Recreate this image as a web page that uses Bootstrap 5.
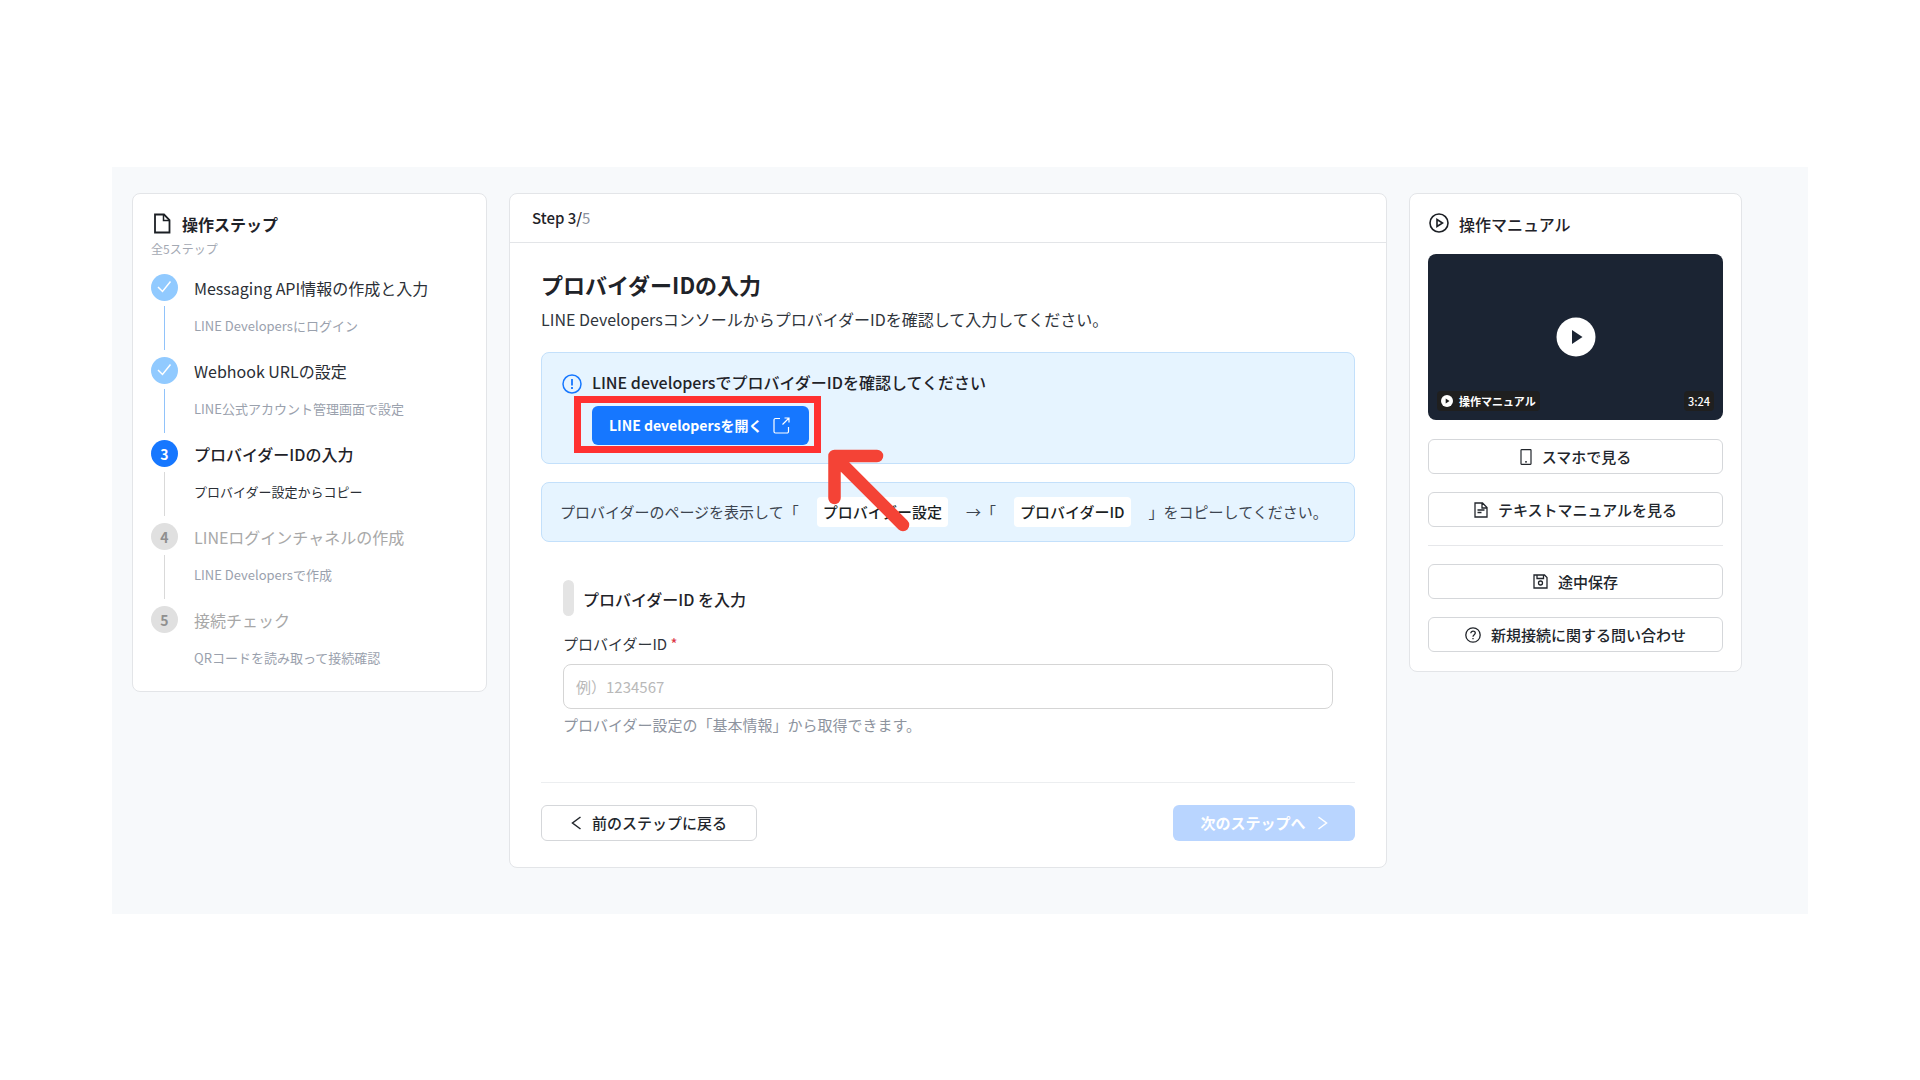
<!DOCTYPE html>
<html lang="ja">
<head>
<meta charset="utf-8">
<meta name="viewport" content="width=device-width, initial-scale=1">
<title>プロバイダーIDの入力</title>
<link href="https://cdn.jsdelivr.net/npm/bootstrap@5.3.0/dist/css/bootstrap.min.css" rel="stylesheet">
<style>
body{font-family:"Noto Sans CJK JP","Noto Sans",sans-serif;font-size:16px;line-height:24px;color:#30353c;background:#fff;padding:167px 0}
svg{display:block;flex:none}
.fw-medium{font-weight:500}
.setup{max-width:1696px;background:#f7f9fb;padding:26px 66px 46px 20px;gap:22px}
.panel{background:#fff;border:1px solid #e3e5e8;border-radius:8px}
.steps-panel{flex:0 0 355px;padding:17px 18px 18px}
.guide-panel{flex:0 0 333px;padding:17px 18px 19px}
.main-panel{flex:1 1 0;min-width:0}
.title-row{gap:9px}
.panel-title{font-size:16px;line-height:26px;font-weight:500;margin:0;color:#1f2329}
.steps-panel .panel-title{font-weight:700}
.count{font-size:12px;line-height:24px;color:#a4a9b3}
.step-list{margin:13px 0 0}
.step{display:flex;gap:16px;height:83px}
.step:last-child{height:67px}
.rail{width:27px;display:flex;flex-direction:column;align-items:center}
.dot{width:27px;height:27px;border-radius:50%;display:flex;align-items:center;justify-content:center;background:#e0e0e0;color:#8f8f8f;font-size:14px;font-weight:700;flex:none}
.rail::after{content:"";width:1px;height:44px;margin-top:5px;background:#d9d9d9}
.step:last-child .rail::after{display:none}
.step-name{line-height:28px;color:#a8a8a8;font-size:15px}
.step-note{font-size:13px;line-height:24px;margin-top:12px;color:#9aa1ad}
.done .dot{background:#91caff}
.done .rail::after{background:#91c3fa}
.done .step-name{color:#2b2f36;font-size:16px}
.now .dot{background:#1677ff;color:#fff}
.now .step-name{color:#1f2329;font-weight:500}
.now .step-note{color:#2b2f36}
.step .step-name{font-size:16px}
.main-head{padding:12px 22px;border-bottom:1px solid #e3e5e8;font-size:15px;font-weight:500;color:#1f2329}
.main-body{padding:25px 31px 26px}
.main-title{font-size:22px;line-height:32px;font-weight:700;margin:0;color:#1f2329}
.main-desc{margin:7px 0 0}
.notice{background:#e6f4ff;border:1px solid #c3e0fb;border-radius:8px;margin-top:18px}
.notice-link{padding:17px 20px 18px;gap:10px;margin-top:21px}
.notice-title{font-weight:500;color:#1f2329;margin-bottom:12px}
.notice-path{padding:14px 18px;color:#3c4450;font-size:15px;gap:18px}
.pill{background:#fff;border-radius:4px;padding:3px 6px;color:#1b1f24;font-weight:500}
.btn-open{background:#1677ff;color:#fff;font-weight:700;border:0;border-radius:6px;padding:7px 19px 8px 17px;gap:11px;line-height:24px;font-size:14px}
.btn-open:hover{background:#0958d9;color:#fff}
.highlight{position:absolute;inset:-10px -12px -8px -18px;border:7px solid #ff3131;pointer-events:none}
.pointer{position:absolute;left:235px;top:43px;pointer-events:none;z-index:2}
.entry{padding:38px 22px 45px}
.entry-head{gap:9px}
.entry-head .panel-title{padding-top:6px}
.entry-bar{width:11px;height:36px;border-radius:6px;background:#e4e4e4}
.id-input{height:45px;border:1px solid #d5d5d5;border-radius:8px;padding:0 12px;font-size:15px}
.id-input::placeholder{color:#b9b9b9}
.entry label{font-size:15px}
.hint{color:#8d939e}
.entry .hint{font-size:15px}
.foot{border-top:1px solid #eceef0;padding-top:22px}
.btn-line{background:#fff;border:1px solid #d5d7da;border-radius:6px;color:#22262c;font-size:15px;line-height:24px;font-weight:500;padding:5px 10px;gap:10px;display:flex;align-items:center;justify-content:center}
.btn-back{width:216px}
.btn-next{width:182px;background:#b9d5ff;border:0;color:#fff;font-size:15px;line-height:24px;font-weight:700;border-radius:6px;padding:6px;gap:11px}
.btn-next:disabled{background:#b9d5ff;color:#fff;opacity:1}
.video{width:100%;height:166px;background:#1b2433;border:0;border-radius:8px;padding:0 9px 9px;margin-top:17px;color:#fff;font-size:11px;line-height:20px;position:relative}
.video .play{position:absolute;left:50%;top:50%;transform:translate(-50%,-50%)}
.chip{background:#1f1f1f;border-radius:4px;padding:0 4px;gap:6px}
.guide-actions{gap:18px;margin-top:19px}
.guide-actions .btn-line{line-height:23px}
.rule{border-top:1px solid #e6e7ea}
</style>
<script src="https://cdn.jsdelivr.net/npm/bootstrap@5.3.0/dist/js/bootstrap.bundle.min.js"></script>
</head>
<body>
<div class="setup container-fluid d-flex align-items-start">

  <aside class="panel steps-panel">
    <div class="title-row d-flex align-items-center">
      <svg width="22" height="22" viewBox="0 0 22 22" fill="none" stroke="#1b1f24" stroke-width="1.800"><path d="M4 1.500h9l5.500 5.500v12.500H4z"/><path d="M12.500 2v5.500h5.500" stroke-width="1.500"/></svg>
      <h2 class="panel-title">操作ステップ</h2>
    </div>
    <div class="count">全5ステップ</div>
    <ol class="step-list list-unstyled">
      <li class="step done"><div class="rail"><span class="dot"><svg width="15" height="13" viewBox="0 0 15 13" fill="none" stroke="#fff" stroke-width="1.500"><path d="M1 6l4.500 4.500L13.500 .5"/></svg></span></div><div><div class="step-name">Messaging API情報の作成と入力</div><div class="step-note">LINE Developersにログイン</div></div></li>
      <li class="step done"><div class="rail"><span class="dot"><svg width="15" height="13" viewBox="0 0 15 13" fill="none" stroke="#fff" stroke-width="1.500"><path d="M1 6l4.500 4.500L13.500 .5"/></svg></span></div><div><div class="step-name">Webhook URLの設定</div><div class="step-note">LINE公式アカウント管理画面で設定</div></div></li>
      <li class="step now" aria-current="step"><div class="rail"><span class="dot">3</span></div><div><div class="step-name">プロバイダーIDの入力</div><div class="step-note">プロバイダー設定からコピー</div></div></li>
      <li class="step"><div class="rail"><span class="dot">4</span></div><div><div class="step-name">LINEログインチャネルの作成</div><div class="step-note">LINE Developersで作成</div></div></li>
      <li class="step"><div class="rail"><span class="dot">5</span></div><div><div class="step-name">接続チェック</div><div class="step-note">QRコードを読み取って接続確認</div></div></li>
    </ol>
  </aside>

  <main class="panel main-panel">
    <div class="main-head">Step 3/<span class="fw-normal hint">5</span></div>
    <div class="main-body">
      <h1 class="main-title">プロバイダーIDの入力</h1>
      <p class="main-desc">LINE DevelopersコンソールからプロバイダーIDを確認して入力してください。</p>

      <div class="notice notice-link d-flex align-items-start">
        <svg class="mt-1" width="20" height="20" viewBox="0 0 20 20" fill="none" stroke="#1677ff" stroke-width="1.500"><circle cx="10" cy="10" r="9"/><path d="M10 5v6.500M10 13v2" stroke-width="1.800"/></svg>
        <div>
          <div class="notice-title">LINE developersでプロバイダーIDを確認してください</div>
          <div class="position-relative d-inline-flex">
            <a class="btn btn-open d-inline-flex align-items-center" href="#">LINE developersを開く
              <svg width="17" height="17" viewBox="0 0 17 17" fill="none" stroke="#fff" stroke-width="1.200"><path d="M7 1.500H2.500A1.500 1.500 0 0 0 1 3v11.500A1.500 1.500 0 0 0 2.500 16h11.500a1.500 1.500 0 0 0 1.500-1.500V10M9.500 7.500L16 1M11.500 1H16v4.500"/></svg></a>
            <span class="highlight"></span>
            <svg class="pointer" width="84" height="84" viewBox="0 0 84 84" fill="none" stroke="#f44336" stroke-width="12.500" stroke-linecap="round" stroke-linejoin="round"><path d="M50 7H7.500V49M9 9L76 76"/></svg>
          </div>
        </div>
      </div>

      <div class="notice notice-path d-flex align-items-center">
        <span>プロバイダーのページを表示して「</span><span class="pill">プロバイダー設定</span><span>→「</span><span class="pill">プロバイダーID</span><span>」をコピーしてください。</span>
      </div>

      <form class="entry">
        <div class="entry-head d-flex"><span class="entry-bar"></span><h2 class="panel-title">プロバイダーID を入力</h2></div>
        <label for="provider" class="mt-3 mb-2">プロバイダーID <span class="text-danger">*</span></label>
        <input id="provider" class="form-control id-input" type="text" placeholder="例）1234567" aria-describedby="provider-hint">
        <div id="provider-hint" class="hint mt-1">プロバイダー設定の「基本情報」から取得できます。</div>
      </form>

      <div class="foot d-flex justify-content-between">
        <button type="button" class="btn btn-line btn-back"><svg width="11" height="14" viewBox="0 0 11 14" fill="none" stroke="#22262c" stroke-width="1.500"><path d="M9.500 1L1.500 7l8 6"/></svg>前のステップに戻る</button>
        <button type="button" class="btn btn-next d-flex align-items-center justify-content-center" disabled>次のステップへ<svg width="11" height="14" viewBox="0 0 11 14" fill="none" stroke="#fff" stroke-width="1.500"><path d="M1.500 1l8 6-8 6"/></svg></button>
      </div>
    </div>
  </main>

  <aside class="panel guide-panel">
    <div class="title-row d-flex align-items-center">
      <svg width="22" height="22" viewBox="0 0 22 22" fill="none" stroke="#1b1f24" stroke-width="1.600"><circle cx="11" cy="10" r="9"/><path d="M9 6.500v7l5.500-3.500z"/></svg>
      <h2 class="panel-title">操作マニュアル</h2>
    </div>
    <button type="button" class="video d-flex align-items-end justify-content-between" aria-label="操作マニュアルを再生">
      <svg class="play" width="40" height="40" viewBox="0 0 40 40"><circle cx="20" cy="20" r="19.500" fill="#fff"/><path d="M16 13v14l10.500-7z" fill="#1b2433"/></svg>
      <span class="chip d-flex align-items-center fw-bold"><svg width="12" height="12" viewBox="0 0 12 12"><circle cx="6" cy="6" r="6" fill="#fff"/><path d="M4.700 3.500v5L8.500 6z" fill="#1f1f1f"/></svg>操作マニュアル</span>
      <span class="chip fw-medium">3:24</span>
    </button>
    <div class="guide-actions d-flex flex-column">
      <button type="button" class="btn btn-line"><svg width="12" height="16" viewBox="0 0 12 16" fill="none" stroke="#22262c" stroke-width="1.200"><rect x="1" y=".7" width="10" height="14.600" rx=".5"/><path d="M5 12.800h2"/></svg>スマホで見る</button>
      <button type="button" class="btn btn-line"><svg width="14" height="16" viewBox="0 0 14 16" fill="none" stroke="#22262c" stroke-width="1.300"><path d="M1 1h7.500L13 5.500V15H1zM8 1v5h5M3.500 8h7M3.500 10.500h4"/></svg>テキストマニュアルを見る</button>
      <div class="rule"></div>
      <button type="button" class="btn btn-line"><svg width="15" height="15" viewBox="0 0 15 15" fill="none" stroke="#22262c" stroke-width="1.300"><path d="M1 1h10.500L14 3.500V14H1zM4 1v3.500h6.500V1"/><circle cx="7.500" cy="9" r="2"/></svg>途中保存</button>
      <button type="button" class="btn btn-line"><svg width="16" height="16" viewBox="0 0 16 16" fill="none" stroke="#22262c" stroke-width="1.300"><circle cx="8" cy="8" r="7.200"/><path d="M5.800 6.300C5.800 3.300 10.300 3.500 10.300 6.100 10.300 7.700 8 7.800 8 9.700M8 10.900v1.300"/></svg>新規接続に関する問い合わせ</button>
    </div>
  </aside>
</div>
</body>
</html>
